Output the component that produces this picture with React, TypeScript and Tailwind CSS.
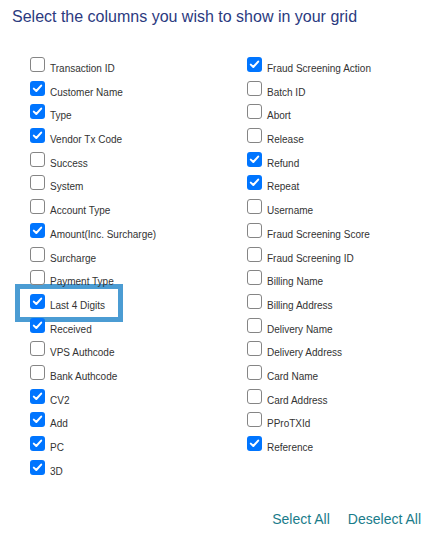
import React, { useState } from 'react';

type Col = { label: string; on: boolean; highlight?: boolean }

const leftCols: Col[] = [
  { label: 'Transaction ID', on: false },
  { label: 'Customer Name', on: true },
  { label: 'Type', on: true },
  { label: 'Vendor Tx Code', on: true },
  { label: 'Success', on: false },
  { label: 'System', on: false },
  { label: 'Account Type', on: false },
  { label: 'Amount(Inc. Surcharge)', on: true },
  { label: 'Surcharge', on: false },
  { label: 'Payment Type', on: false },
  { label: 'Last 4 Digits', on: true, highlight: true },
  { label: 'Received', on: true },
  { label: 'VPS Authcode', on: false },
  { label: 'Bank Authcode', on: false },
  { label: 'CV2', on: true },
  { label: 'Add', on: true },
  { label: 'PC', on: true },
  { label: '3D', on: true },
]

const rightCols: Col[] = [
  { label: 'Fraud Screening Action', on: true },
  { label: 'Batch ID', on: false },
  { label: 'Abort', on: false },
  { label: 'Release', on: false },
  { label: 'Refund', on: true },
  { label: 'Repeat', on: true },
  { label: 'Username', on: false },
  { label: 'Fraud Screening Score', on: false },
  { label: 'Fraud Screening ID', on: false },
  { label: 'Billing Name', on: false },
  { label: 'Billing Address', on: false },
  { label: 'Delivery Name', on: false },
  { label: 'Delivery Address', on: false },
  { label: 'Card Name', on: false },
  { label: 'Card Address', on: false },
  { label: 'PProTXId', on: false },
  { label: 'Reference', on: true },
]

function Box({ checked }: { checked: boolean }) {
  if (checked) {
    return (
      <span className="mt-[2px] flex h-[15px] w-[15px] shrink-0 items-center justify-center rounded-[3px] bg-[#0075ff]">
        <svg width="11" height="11" viewBox="0 0 11 11" fill="none">
          <path d="M1.8 5.6 L4.3 8 L9.2 2.6" stroke="white" strokeWidth="2" strokeLinecap="round" strokeLinejoin="round" />
        </svg>
      </span>
    )
  }
  return <span className="mt-[2px] h-[15px] w-[15px] shrink-0 rounded-[3px] border border-[#858585] bg-white" />
}

function Row({ col, checked, onToggle }: { col: Col; checked: boolean; onToggle: () => void }) {
  return (
    <div className="relative flex h-[23.7px] cursor-pointer items-start" onClick={onToggle}>
      {col.highlight && (
        <span className="absolute left-[-15px] top-[-8px] z-10 h-[38px] w-[108px] border-[5px] border-[#4b9cd3] bg-white" />
      )}
      <div className="relative z-20 flex items-start gap-[5px]">
        <Box checked={checked} />
        <span className="pt-[7px] text-[10px] leading-[14px] text-[#333]">{col.label}</span>
      </div>
    </div>
  )
}

function Column({ cols }: { cols: Col[] }) {
  const [state, setState] = useState(cols.map(c => c.on))
  return (
    <div className="flex flex-col">
      {cols.map((c, i) => (
        <Row
          key={c.label}
          col={c}
          checked={state[i]}
          onToggle={() => setState(s => s.map((v, j) => (j === i ? !v : v)))}
        />
      ))}
    </div>
  )
}

export default function App() {
  return (
    <div className="h-[548px] w-[443px] bg-white font-['Liberation_Sans',Arial,sans-serif]">
      <div className="px-[12px] pt-[7px]">
        <h2 className="text-[16px] leading-[20px] text-[#2b3a80]">Select the columns you wish to show in your grid</h2>
      </div>

      {/* column picker */}
      <div className="mt-[28px] grid grid-cols-[217px_1fr] pl-[30px]">
        <Column cols={leftCols} />
        <Column cols={rightCols} />
      </div>

      <div className="mt-[28px] flex justify-end gap-[18px] pr-[22px] text-[14px] leading-[20px] text-[#1a7c8a]">
        <button className="cursor-pointer">Select All</button>
        <button className="cursor-pointer">Deselect All</button>
      </div>
    </div>
  )
}
